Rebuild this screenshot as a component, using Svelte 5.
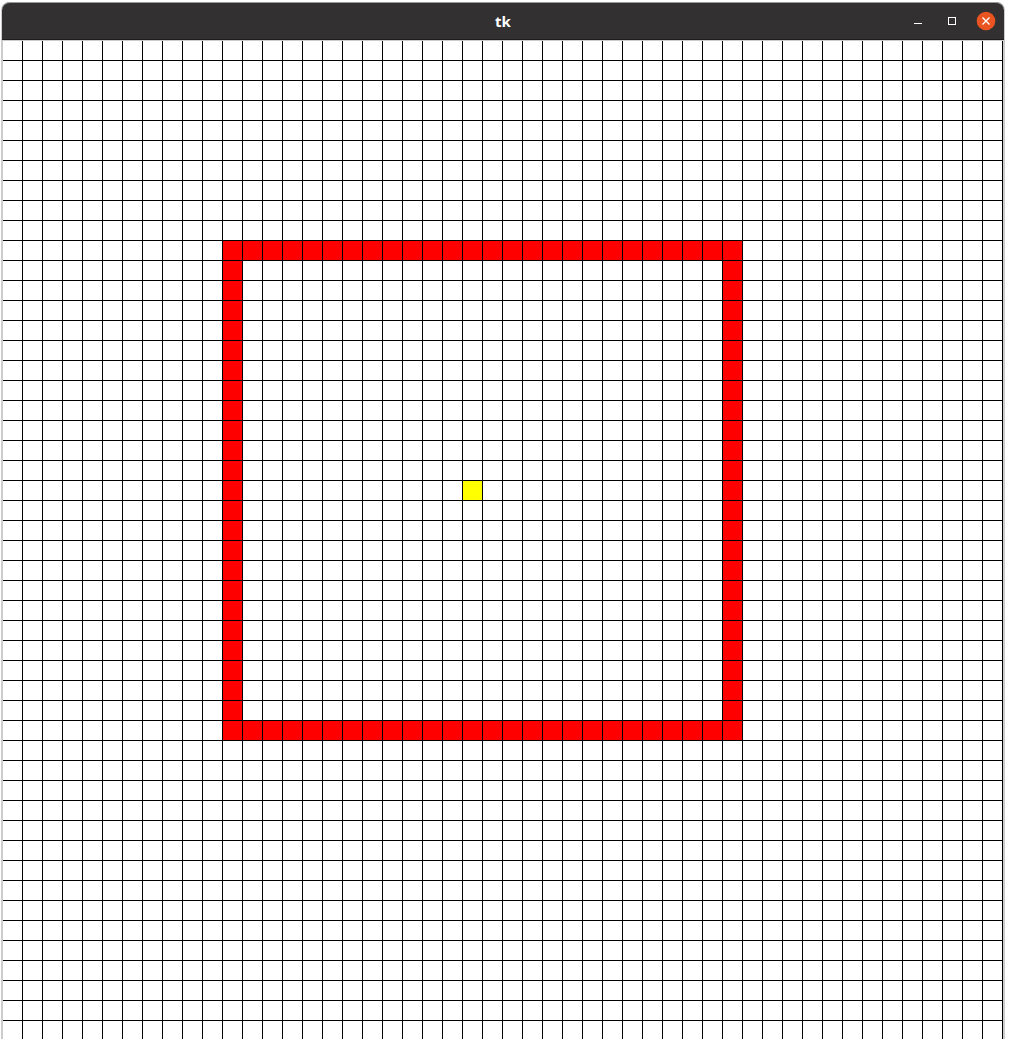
<script>
  const cell = 20;
  const count = 50;
  const lines = Array.from({ length: count }, (_, i) => (i + 1) * cell - 1);
  const wall = { col: 11, row: 10, cols: 26, rows: 25 };
  const food = { col: 23, row: 22 };
</script>

<main class="window">
  <header class="titlebar">
    <h1>tk</h1>
    <div class="controls">
      <button type="button" aria-label="Minimize">
        <svg viewBox="0 0 20 20" shape-rendering="crispEdges"><rect x="6" y="12" width="8" height="1" fill="#fff" /></svg>
      </button>
      <button type="button" aria-label="Maximize">
        <svg viewBox="0 0 20 20" shape-rendering="crispEdges"><path d="M6 6h8v8H6zM7 7v6h6V7z" fill="#fff" fill-rule="evenodd" /></svg>
      </button>
      <button type="button" aria-label="Close">
        <svg viewBox="0 0 20 20">
          <circle cx="10" cy="10" r="9.3" fill="#e95420" />
          <path d="M6.5 6.5l7 7M13.5 6.5l-7 7" stroke="#fff" stroke-width="1.4" />
        </svg>
      </button>
    </div>
  </header>
  <div class="canvas">
    <svg class="board" viewBox="0 0 1000 1000" shape-rendering="crispEdges" role="img" aria-label="Game board">
      <rect
        x={wall.col * cell + cell / 2}
        y={wall.row * cell + cell / 2}
        width={(wall.cols - 1) * cell}
        height={(wall.rows - 1) * cell}
        fill="none"
        stroke="#f00"
        stroke-width={cell}
      />
      <rect x={food.col * cell} y={food.row * cell} width={cell} height={cell} fill="#ff0" />
      {#each lines as at}
        <rect x={at} y="0" width="1" height="1000" />
        <rect x="0" y={at} width="1000" height="1" />
      {/each}
    </svg>
  </div>
</main>

<style>
  :global(body) {
    margin: 0;
    background: #fff;
  }
  .window {
    box-sizing: border-box;
    height: 100vh;
    padding: 2px 5px 0 1px;
    display: flex;
    flex-direction: column;
    overflow: hidden;
  }
  .titlebar {
    box-sizing: border-box;
    flex: none;
    height: 38px;
    display: grid;
    grid-template-columns: 1fr auto 1fr;
    align-items: center;
    margin: 0 1px;
    padding: 0 8px;
    background: #323031;
    border-top: 1px solid #999;
    border-bottom: 1px solid #1d1b1c;
    border-radius: 8px 8px 0 0;
    box-shadow: 1px 0 #ccc, -1px 0 #ccc;
  }
  h1 {
    grid-column: 2;
    margin: 0;
    font: 700 15px/20px "Noto Sans", sans-serif;
    color: #fff;
  }
  .controls {
    display: flex;
    justify-content: flex-end;
    gap: 14px;
  }
  button {
    width: 20px;
    height: 20px;
    padding: 0;
    border: 0;
    background: none;
  }
  button svg,
  .board {
    display: block;
    width: 100%;
  }
  .canvas {
    flex: 1;
    min-height: 0;
    overflow: hidden;
    border: solid #ccc;
    border-width: 1px 2px 0;
    background: #fff;
  }
</style>
